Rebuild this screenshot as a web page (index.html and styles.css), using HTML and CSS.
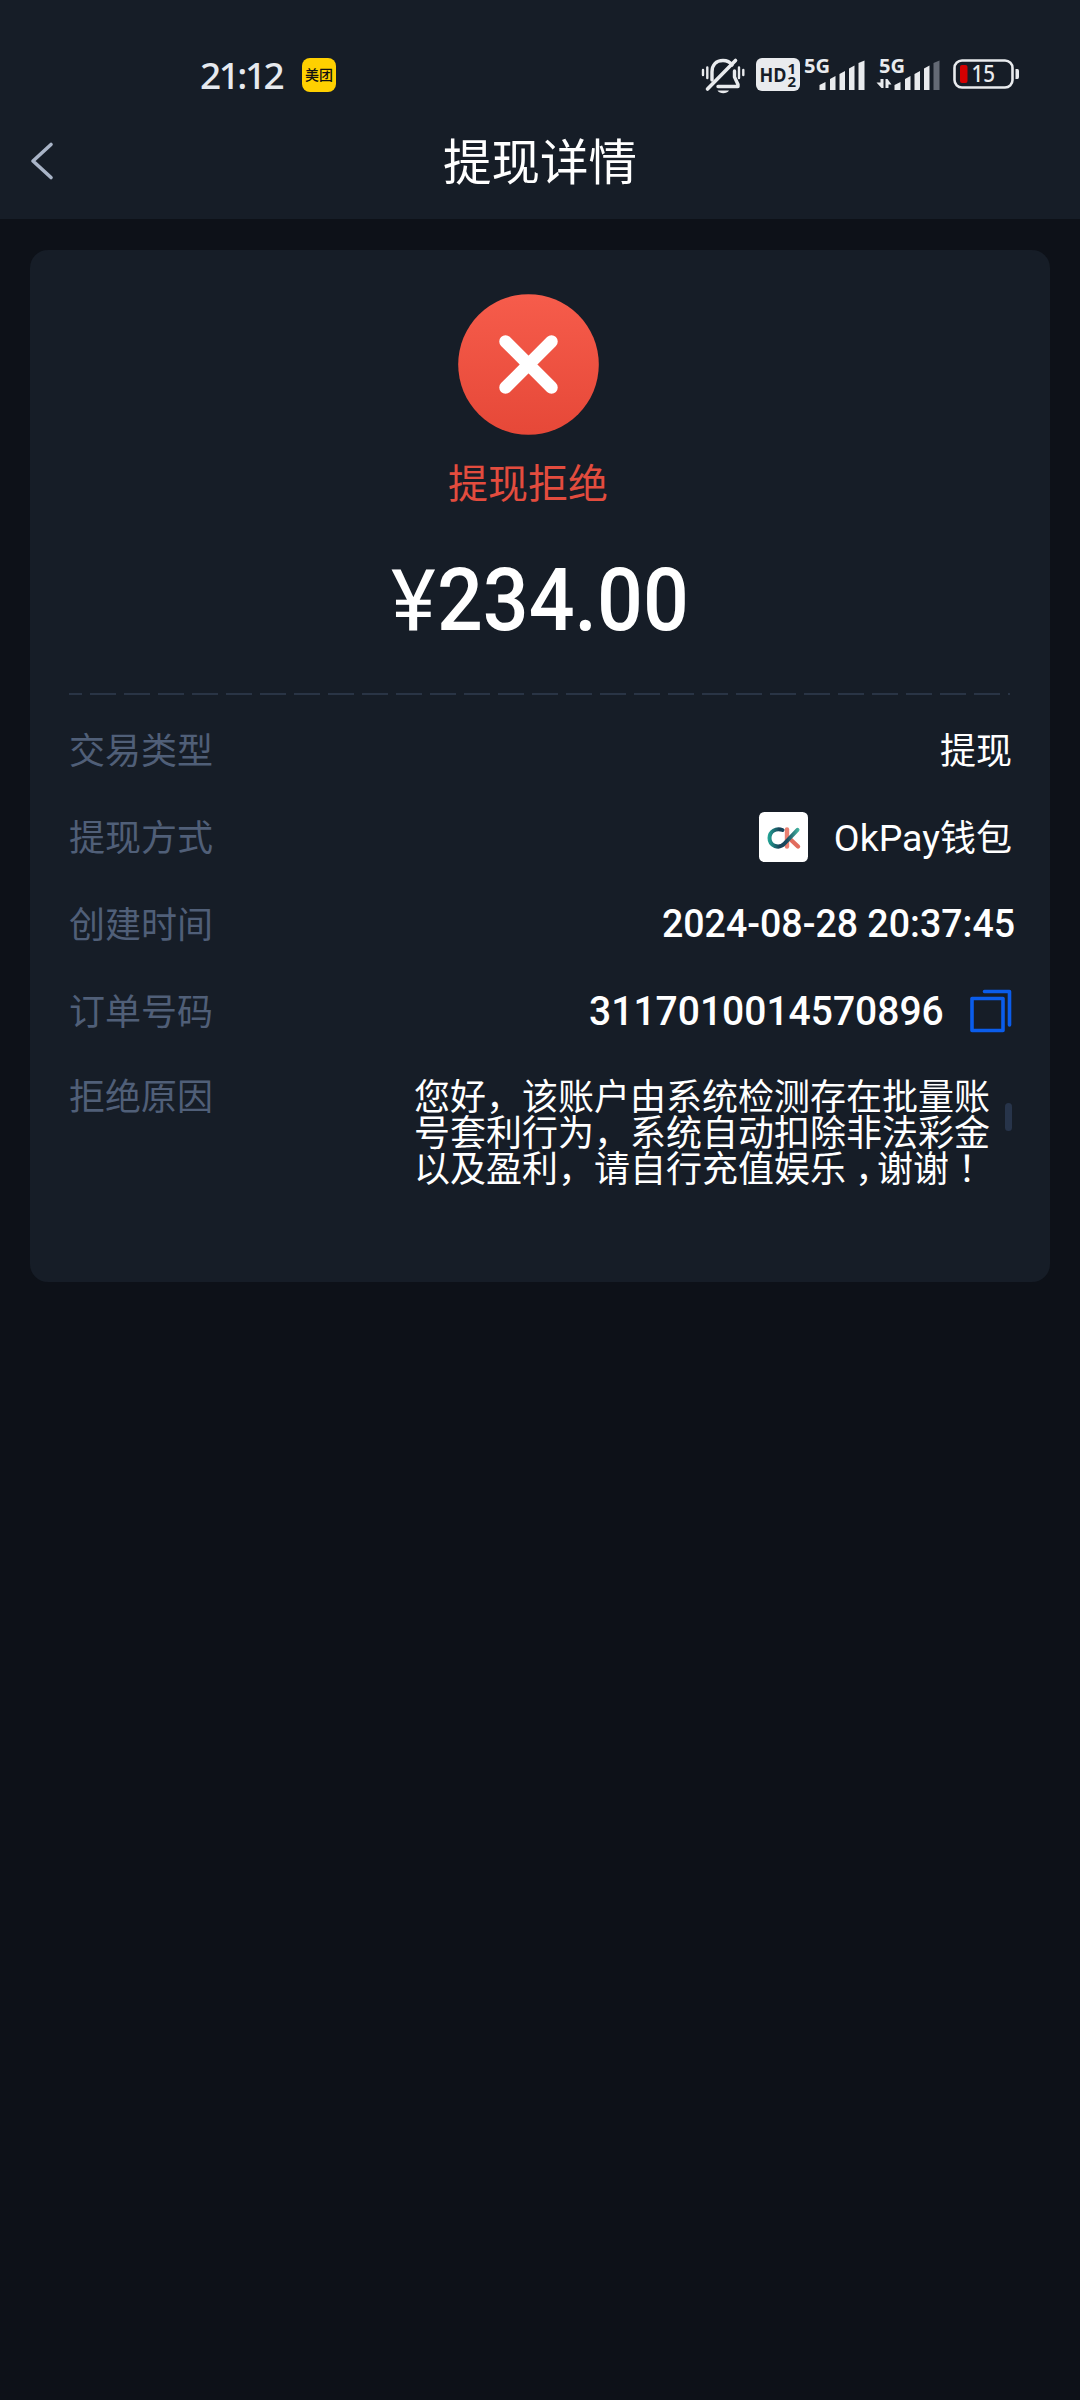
FILE: index.html
```html
<!DOCTYPE html>
<html lang="zh-CN">
<head>
<meta charset="utf-8">
<title>提现详情</title>
<link rel="stylesheet" href="styles.css">
</head>
<body>
<header class="top">
  <div class="status">
    <span class="clock">21:12</span>
    <span class="app-badge">美团</span>
    <div class="status-icons">
      <svg class="bell" width="44" height="40" viewBox="0 0 44 40" fill="none" stroke="#e9ebee" stroke-linecap="round">
        <path d="M11 24V16C11 9 15 4.500 22 4.500C26 4.500 29 6 31 9M33.500 15V21L37 28.500V30.500H17" stroke-width="3.400" stroke-linejoin="round"/>
        <path d="M6.500 33L34.500 4.500" stroke-width="3.600"/>
        <path d="M2 14V19M6.300 11.500V22M38 11.500V22M42.300 14V19" stroke-width="2.400"/>
        <path d="M16.500 34.500H28C26 38 18.500 38 16.500 34.500Z" fill="#e9ebee" stroke="none"/>
      </svg>
      <svg class="hd" width="44" height="34" viewBox="0 0 44 34">
        <rect width="44" height="33" rx="6" fill="#e9ebee"/>
        <text class="hd-text" x="3.500" y="23.700" textLength="27" lengthAdjust="spacingAndGlyphs">HD</text>
        <text class="hd-num" x="31.500" y="15.500">1</text>
        <text class="hd-num" x="31.500" y="28.500">2</text>
      </svg>
      <svg class="signal" width="62" height="34" viewBox="0 0 62 34" fill="#e9ebee">
        <text class="net" x="0" y="15" textLength="26" lengthAdjust="spacingAndGlyphs">5G</text>
        <path d="M15.500 32V27L21.500 24V32ZM26 32V21L31.500 18V32ZM35.500 32V16L41 13V32ZM45 32V10.500L50.500 7.500V32ZM54.500 32V5L60.500 2.500V32Z"/>
      </svg>
      <svg class="signal" width="62" height="34" viewBox="0 0 62 34" fill="#e9ebee">
        <text class="net" x="0" y="15" textLength="26" lengthAdjust="spacingAndGlyphs">5G</text>
        <path d="M15.500 32V27L21.500 24V32ZM26 32V21L31.500 18V32ZM35.500 32V16L41 13V32ZM45 32V10.500L50.500 7.500V32Z"/>
        <path d="M54.500 32V5L60.500 2.500V32Z" fill="#646a75"/>
        <path d="M-2.500 24.500H1.500V21H4.500V30H2.500ZM6.500 21H8.500L12.500 26.500H9.500V30H6.500Z"/>
      </svg>
      <svg class="battery" width="68" height="32" viewBox="0 0 68 32">
        <rect x="1.500" y="2.500" width="58" height="27" rx="7.500" fill="none" stroke="#e9ebee" stroke-width="2.600"/>
        <rect x="7" y="7" width="7.500" height="18" rx="2" fill="#d40000"/>
        <path d="M62.500 11H64.500Q66 11 66 13V19Q66 21 64.500 21H62.500Z" fill="#e9ebee"/>
        <text class="level" x="18.500" y="24.200" textLength="23.500" lengthAdjust="spacingAndGlyphs">15</text>
      </svg>
    </div>
  </div>
  <div class="nav">
    <svg class="back" width="24" height="38" viewBox="0 0 24 38" fill="none" stroke="#a9b4c7" stroke-width="3.600" stroke-linecap="round" stroke-linejoin="round"><path d="M21 2.500L3 19L21 35.500"/></svg>
    <h1 class="title">提现详情</h1>
  </div>
</header>
<main class="card">
  <section class="result">
    <svg class="fail" width="141" height="141" viewBox="0 0 141 141">
      <defs><linearGradient id="red" x1="0" y1="0" x2="0" y2="1"><stop offset="0" stop-color="#f65c4b"/><stop offset="1" stop-color="#e64838"/></linearGradient></defs>
      <circle cx="70.500" cy="70.500" r="70.300" fill="url(#red)"/>
      <path d="M47.500 47.500L93.500 93.500M93.500 47.500L47.500 93.500" stroke="#fff" stroke-width="12.500" stroke-linecap="round"/>
    </svg>
    <p class="state">提现拒绝</p>
  </section>
  <p class="amount"><span class="yen">¥</span><span class="sum">234.00</span></p>
  <div class="divider"></div>
  <dl class="rows">
    <div class="row"><dt>交易类型</dt><dd class="type">提现</dd></div>
    <div class="row"><dt>提现方式</dt><dd class="wallet">
      <svg class="logo" width="49" height="50" viewBox="0 0 49 50" fill="none" stroke-linecap="round">
        <defs><linearGradient id="teal" x1="9" y1="0" x2="40" y2="0" gradientUnits="userSpaceOnUse"><stop offset="0" stop-color="#23a596"/><stop offset=".38" stop-color="#174157"/><stop offset=".62" stop-color="#174b60"/><stop offset="1" stop-color="#45b8a2"/></linearGradient></defs>
        <rect width="49" height="50" rx="5.500" fill="#fff"/>
        <path d="M28 17.500V34.500" stroke="#ea8071" stroke-width="4.400"/>
        <path d="M31 27L39 34.500" stroke="#e16c5e" stroke-width="4.400"/>
        <path d="M23.500 18C17 15.500 10.500 19.500 10.500 26C10.500 34 20 37.500 25.500 31.500L38.500 17.800" stroke="url(#teal)" stroke-width="4"/>
      </svg>
      <span class="wallet-name"><span class="latin">OkPay</span>钱包</span></dd></div>
    <div class="row"><dt>创建时间</dt><dd class="digits date">2024-08-28 20:37:45</dd></div>
    <div class="row"><dt>订单号码</dt><dd class="order"><span class="digits number">3117010014570896</span>
      <svg class="copy" width="42" height="44" viewBox="0 0 42 44" fill="none" stroke="#0b5deb" stroke-width="3.600" stroke-linejoin="round" stroke-linecap="round"><rect x="2" y="9.500" width="31" height="32"/><path d="M14.500 2.500H39.500V36"/></svg></dd></div>
    <div class="row reason"><dt>拒绝原因</dt><dd class="reason-text"><p>您好，该账户由系统检测存在批量账号套利行为，系统自动扣除非法彩金以及盈利，请自行充值娱乐<span class="comma">，</span>谢谢<span class="mark" lang="zh-TW">！</span></p><i class="thumb"></i></dd></div>
  </dl>
</main>
</body>
</html>
```
FILE: styles.css
```css
* { box-sizing: border-box; margin: 0; padding: 0; }
body {
  min-height: 2400px;
  background: #0d1118;
  color: #fff;
  font-family: Roboto, "Noto Sans CJK SC", sans-serif;
}
svg { display: block; overflow: visible; flex: none; }
.top { height: 219px; background: #161d27; }
.status { display: flex; height: 110px; padding: 40px 50px 0 200px; }
.clock {
  width: 102px;
  padding-top: 10px;
  font: 500 37px/50px "Noto Sans", sans-serif;
  letter-spacing: -2.5px;
  color: #e6e9ee;
}
.app-badge {
  width: 34px; height: 34px; margin-top: 18px;
  border-radius: 8px;
  background: #ffd000;
  color: #111;
  font: 500 14px/32px "Noto Sans CJK SC", sans-serif;
  text-align: center;
}
.status-icons { display: flex; margin-left: 365px; }
.bell { margin-top: 16px; }
.hd { margin: 18px 0 0 11px; }
.signal { margin: 18px 0 0 4px; }
.signal + .signal { margin-left: 13px; }
.battery { margin: 18px 0 0 12px; }
.hd-text { font: 700 20px "Open Sans", sans-serif; fill: #161d28; }
.hd-num { font: 700 15px "Open Sans", sans-serif; fill: #161d28; }
.net { font: 700 20px "Open Sans", sans-serif; }
.level { font: 500 23px "Noto Sans", sans-serif; fill: #e9ebee; }
.nav { display: flex; align-items: center; height: 102px; padding: 0 30px; }
.title { flex: 1; margin-right: 24px; padding-top: 6px; font-size: 48.5px; font-weight: 400; line-height: 60px; text-align: center; }
.card {
  width: 1020px; height: 1032px;
  margin: 31px 0 0 30px;
  padding: 44px 38px 0 39px;
  border-radius: 18px;
  background: #161d27;
}
.result { display: flex; flex-direction: column; align-items: center; padding-right: 25px; }
.state { margin-top: 20px; font-size: 40px; line-height: 60px; color: #e34c3e; }
.amount { display: flex; align-items: baseline; height: 140px; margin-top: 38px; padding-left: 322px; line-height: 94px; font-weight: 500; }
.yen { width: 46px; font-size: 85px; font-weight: 400; }
.sum { font-size: 88px; transform: scaleX(.917); transform-origin: left; }
.divider {
  height: 2px; margin-right: 2px;
  background: repeating-linear-gradient(90deg, #293445 0 26px, transparent 26px 34px) -12.800px 0 / 1020px 2px;
}
.rows { padding-top: 11px; }
.row { display: flex; justify-content: space-between; align-items: center; height: 87px; font-size: 36px; line-height: 50px; }
dt, .type, .wallet-name { padding-top: 4px; }
dt { color: #505f78; }
.wallet, .order { display: flex; align-items: center; }
.wallet-name { margin-left: 26px; }
.latin { font-size: 37.5px; }
.digits { font-weight: 500; transform-origin: right; }
.date { margin-right: -3px; font-size: 39px; transform: scaleX(.962); }
.number { padding-top: 3px; font-size: 40px; transform: scaleX(.975); }
.copy { margin-left: 26px; }
.reason { align-items: flex-start; padding-top: 15px; }
.reason-text { display: flex; width: 598px; line-height: 36px; padding-top: 7px; font-family: "Noto Sans CJK SC", sans-serif; }
.reason-text p { width: 578px; flex: none; }
.comma { padding-left: 9px; letter-spacing: -14px; }
.mark { font-family: "Noto Sans CJK TC", sans-serif; letter-spacing: -5px; }
.thumb { width: 8px; height: 28px; margin: 27px 0 0 13px; border-radius: 4px; background: #27344a; }
```
